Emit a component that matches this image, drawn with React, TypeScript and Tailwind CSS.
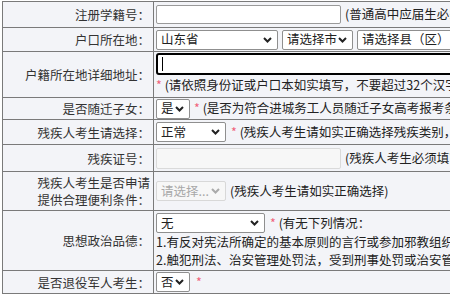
import React from "react";

const font = { fontFamily: '"Noto Sans CJK SC", "Microsoft YaHei", sans-serif' };

function Chevron({ color = "#222" }: { color?: string }) {
  return (
    <svg width="9" height="6" viewBox="0 0 9 6" className="shrink-0">
      <path d="M1 1 L4.5 4.5 L8 1" fill="none" stroke={color} strokeWidth="2" />
    </svg>
  );
}

function Select({ text, w, disabled }: { text: string; w: string; disabled?: boolean }) {
  return (
    <div
      className={`${w} h-[20px] flex items-center justify-between pl-[4px] pr-[5px] rounded-[2px] border shrink-0 ${
        disabled ? "border-[#d8d8d8] bg-[#f7f7f7] text-[#a8a8a8]" : "border-[#8f8f8f] bg-white text-[#222]"
      }`}
    >
      <span className="whitespace-nowrap overflow-hidden">{text}</span>
      <Chevron color={disabled ? "#aaa" : "#222"} />
    </div>
  );
}

function Star() {
  return <span className="text-[#f0607a]">*</span>;
}

function Row({ h, label, children, top }: { h: string; label: React.ReactNode; children: React.ReactNode; top?: boolean }) {
  return (
    <div className={`flex ${h} border-b border-[#7a7a7a] ${top ? "border-t" : ""}`}>
      <div className="w-[151px] shrink-0 border-r border-[#7a7a7a] flex items-center justify-end pr-[3px] text-right text-[#333] leading-[17px]">
        {label}
      </div>
      <div className="flex-1 pl-[2px] flex flex-col justify-center">{children}</div>
    </div>
  );
}

export default function App() {
  return (
    <div className="w-[450px] h-[296px] overflow-hidden bg-white text-[12.5px]" style={font}>
      <div className="w-[720px] ml-[2px] border-l border-[#7a7a7a] bg-[#f3f4f8] mt-[1px]">
        <Row h="h-[27px]" top label="注册学籍号：">
          <div className="flex items-center gap-[4px]">
            <div className="w-[185px] h-[19px] bg-white border border-[#9a9a9a] rounded-[2px]" />
            <span className="text-[#222] whitespace-nowrap">(普通高中应届生必须填写)</span>
          </div>
        </Row>
        <Row h="h-[24px]" label="户口所在地：">
          <div className="flex items-center gap-[4px]">
            <Select text="山东省" w="w-[122px]" />
            <Select text="请选择市" w="w-[71px]" />
            <Select text="请选择县（区）" w="w-[140px]" />
          </div>
        </Row>
        <Row h="h-[46px]" label="户籍所在地详细地址：">
          <div className="flex flex-col justify-start h-full pt-[1px]">
            <div className="w-[400px] h-[22px] bg-white border-2 border-black rounded-[3px] flex items-center pl-[4px]">
              <div className="w-[1px] h-[14px] bg-black" />
            </div>
            <div className="whitespace-nowrap text-[#222] mt-[1px] leading-[18px]">
              <Star /> (请依照身份证或户口本如实填写，不要超过32个汉字)
            </div>
          </div>
        </Row>
        <Row h="h-[22px]" label="是否随迁子女：">
          <div className="flex items-center gap-[4px] whitespace-nowrap text-[#222]">
            <Select text="是" w="w-[34px]" />
            <span>
              <Star /> (是否为符合进城务工人员随迁子女高考报考条件的考生)
            </span>
          </div>
        </Row>
        <Row h="h-[25px]" label="残疾人考生请选择：">
          <div className="flex items-center gap-[5px] whitespace-nowrap text-[#222]">
            <Select text="正常" w="w-[70px]" />
            <span>
              <Star /> (残疾人考生请如实正确选择残疾类别，非残疾人考生选择正常)
            </span>
          </div>
        </Row>
        <Row h="h-[27px]" label="残疾证号：">
          <div className="flex items-center gap-[4px] whitespace-nowrap text-[#222]">
            <div className="w-[185px] h-[21px] bg-[#f7f7f7] border border-[#dadada] rounded-[2px]" />
            <span>(残疾人考生必须填写残疾证号)</span>
          </div>
        </Row>
        <Row
          h="h-[39px]"
          label={
            <span className="text-left inline-block">
              残疾人考生是否申请
              <br />
              提供合理便利条件：
            </span>
          }
        >
          <div className="flex items-center gap-[4px] whitespace-nowrap text-[#222]">
            <Select text="请选择..." w="w-[70px]" disabled />
            <span>(残疾人考生请如实正确选择)</span>
          </div>
        </Row>
        <Row h="h-[60px]" label="思想政治品德：">
          <div className="flex flex-col whitespace-nowrap text-[#222] leading-[18px]">
            <div className="flex items-center gap-[5px]">
              <Select text="无" w="w-[109px]" />
              <span>
                <Star /> (有无下列情况：
              </span>
            </div>
            <div>1.有反对宪法所确定的基本原则的言行或参加邪教组织情况</div>
            <div>2.触犯刑法、治安管理处罚法，受到刑事处罚或治安管理处罚</div>
          </div>
        </Row>
        <Row h="h-[23px]" label="是否退役军人考生：">
          <div className="flex items-center gap-[6px]">
            <Select text="否" w="w-[34px]" />
            <Star />
          </div>
        </Row>
      </div>
    </div>
  );
}
